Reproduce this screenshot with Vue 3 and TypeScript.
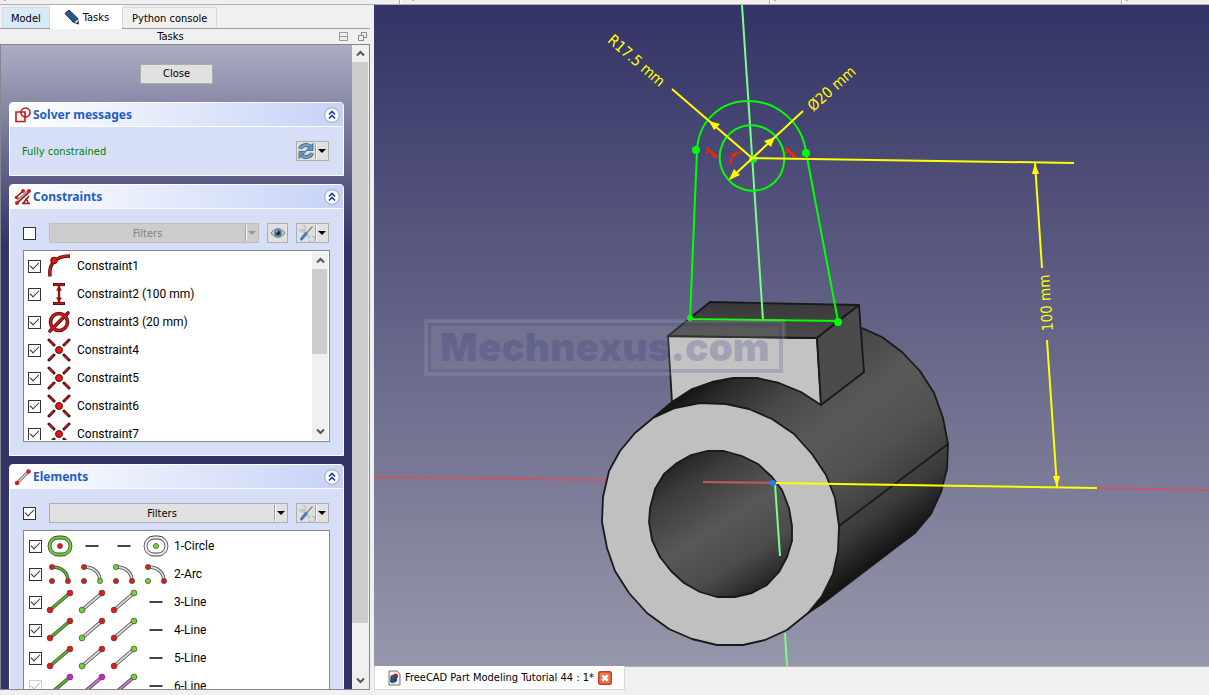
<script setup lang="ts">
import { ref } from 'vue'

interface Constraint {
  name: string
  kind: 'tangent' | 'distance' | 'diameter' | 'coincident'
  on: boolean
}
interface Glyph {
  kind: 'circle' | 'arc' | 'line' | 'none'
  edge: string
  start: string
  end: string
  mid: string
}
interface SketchElement {
  name: string
  on: boolean
  locked: boolean
  glyphs: Glyph[]
}

const RED = '#e01b1b'
const GREEN = '#6fd62a'
const GREY = '#dcdcdc'
const PINK = '#e01bd8'
const LEAF = '#58b81c'

const g = (kind: Glyph['kind'], edge = GREY, start = RED, end = RED, mid = RED): Glyph => ({ kind, edge, start, end, mid })
const lineGlyphs = (): Glyph[] => [g('line', LEAF), g('line', GREY, GREEN, RED), g('line', GREY, RED, GREEN), g('none')]

const constraints = ref<Constraint[]>([
  { name: 'Constraint1', kind: 'tangent', on: true },
  { name: 'Constraint2 (100 mm)', kind: 'distance', on: true },
  { name: 'Constraint3 (20 mm)', kind: 'diameter', on: true },
  { name: 'Constraint4', kind: 'coincident', on: true },
  { name: 'Constraint5', kind: 'coincident', on: true },
  { name: 'Constraint6', kind: 'coincident', on: true },
  { name: 'Constraint7', kind: 'coincident', on: true },
])

const elements = ref<SketchElement[]>([
  { name: '1-Circle', on: true, locked: false, glyphs: [g('circle', GREEN), g('none'), g('none'), g('circle', '#f0f0f0', RED, RED, GREEN)] },
  { name: '2-Arc', on: true, locked: false, glyphs: [g('arc', LEAF), g('arc', GREY, RED, GREEN), g('arc', GREY, GREEN, RED), g('arc', GREY, RED, RED, GREEN)] },
  { name: '3-Line', on: true, locked: false, glyphs: lineGlyphs() },
  { name: '4-Line', on: true, locked: false, glyphs: lineGlyphs() },
  { name: '5-Line', on: true, locked: false, glyphs: lineGlyphs() },
  { name: '6-Line', on: true, locked: true, glyphs: [g('line', LEAF, PINK, PINK), g('line', '#e070e0', GREEN, PINK), g('line', '#e070e0', PINK, GREEN), g('none')] },
])

const filterConstraints = ref(false)
const filterElements = ref(true)
</script>

<template>
  <div class="app">
    <div class="strip" aria-hidden="true"><i></i><i class="wide"></i><i></i><i></i></div>
    <div class="main">
      <aside class="dock">
        <nav class="tabs">
          <button class="tab model">Model</button>
          <button class="tab active">
            <svg width="18" height="18" viewBox="0 0 18 18" aria-hidden="true">
              <path d="M2 4.500 L6 1 L14.500 9 L15.500 15 L10 13Z" fill="#2c5175" stroke="#1d3348" />
              <path d="M4 4 L11.500 11 M6 2.500 L13.500 9.500" stroke="#3d678f" fill="none" />
              <path d="M11.500 13 L14.500 10.500 L16 15.500Z" fill="#c9d3da" /><path d="M13.500 14.300 L15 12.800 L16 15.500Z" fill="#111" />
            </svg>
            Tasks
          </button>
          <button class="tab">Python console</button>
        </nav>
        <div class="title">
          <span>Tasks</span>
          <button aria-label="Collapse"><svg width="9" height="9" viewBox="0 0 9 9"><path d="M.5 .5h8v8h-8zM.5 4.500h8" fill="none" stroke="#999" /></svg></button>
          <button aria-label="Float"><svg width="9" height="9" viewBox="0 0 9 9"><path d="M3.500 3V.5h5v5H6M.5 3.500h5v5h-5z" fill="none" stroke="#888" /></svg></button>
        </div>
        <div class="scroll">
          <div class="tasks">
            <button class="close">Close</button>

            <section class="box">
              <header>
                <svg width="18" height="18" viewBox="0 0 18 18" aria-hidden="true">
                  <path d="M2 6h9v9.500H2z" fill="none" stroke="#c4161c" stroke-width="1.600" /><circle cx="11.500" cy="6.500" r="4.500" fill="none" stroke="#c4161c" stroke-width="1.600" />
                </svg>
                <h2>Solver messages</h2>
                <button class="fold" aria-label="Collapse solver messages"><svg width="16" height="16" viewBox="0 0 16 16"><circle cx="8" cy="8" r="7.300" fill="#fff" stroke="#b4b9d3" stroke-width="1.400" /><path d="M5 7.500l3-3 3 3M5 11.500l3-3 3 3" fill="none" stroke="#1b3d9c" stroke-width="1.700" /></svg></button>
              </header>
              <div class="body solver">
                <span class="ok">Fully constrained</span>
                <button class="tool split" aria-label="Update">
                  <svg width="18" height="18" viewBox="0 0 18 18"><path d="M3 7a6 5 0 0 1 10-2.500M15 11a6 5 0 0 1-10 2.500" fill="none" stroke="#3a6282" stroke-width="4" /><path d="M3 7a6 5 0 0 1 10-2.500M15 11a6 5 0 0 1-10 2.500" fill="none" stroke="#6f9fca" stroke-width="2.400" /><path d="M16 1.500v7h-7zM2 16.500v-7h7z" fill="#6496c4" stroke="#3a6282" stroke-width=".8" /></svg>
                  <span class="drop"></span>
                </button>
              </div>
            </section>

            <section class="box">
              <header>
                <svg width="18" height="18" viewBox="0 0 18 18" aria-hidden="true">
                  <path d="M4 13L14 4" stroke="#777" stroke-width="3.600" /><path d="M4 13L14 4" stroke="#ddd" stroke-width="1.600" /><path d="M2 9.500L9 3M2 16L16 3M9 15.500L15 8M8 15.500h8" fill="none" stroke="#a5161c" stroke-width="1.600" />
                  <g fill="#d01c22"><circle cx="9" cy="3" r="2" /><circle cx="15" cy="3" r="2" /><circle cx="2.500" cy="9.500" r="1.800" /><circle cx="3" cy="15" r="2" /></g><path d="M11 11q3 1 3 4" fill="none" stroke="#c4161c" stroke-width="1.400" />
                </svg>
                <h2>Constraints</h2>
                <button class="fold" aria-label="Collapse constraints"><svg width="16" height="16" viewBox="0 0 16 16"><circle cx="8" cy="8" r="7.300" fill="#fff" stroke="#b4b9d3" stroke-width="1.400" /><path d="M5 7.500l3-3 3 3M5 11.500l3-3 3 3" fill="none" stroke="#1b3d9c" stroke-width="1.700" /></svg></button>
              </header>
              <div class="body">
                <div class="bar">
                  <input v-model="filterConstraints" type="checkbox" aria-label="Enable constraint filters" />
                  <button class="tool filter" disabled><span class="label">Filters</span><span class="drop"></span></button>
                  <button class="tool eye" aria-label="Show or hide"><svg width="16" height="12" viewBox="0 0 18 14"><path d="M1 7q8-10.500 16 0q-8 10.500-16 0Z" fill="#d4dade" stroke="#888" stroke-width="1.400" /><circle cx="9" cy="7" r="4.500" fill="#4577a5" /><circle cx="9" cy="7" r="2.300" fill="#0c2238" /><circle cx="7.500" cy="5.500" r="1" fill="#bcd6ec" /></svg></button>
                  <button class="tool split" aria-label="Constraint settings">
                    <svg width="18" height="18" viewBox="0 0 18 18"><path d="M5 5L13 14" stroke="#c2cacf" stroke-width="3" /><path d="M2.500 4.500a3 3 0 1 0 3-3M12 15.500a3 3 0 1 0 3-3" fill="none" stroke="#c2cacf" stroke-width="2" /><path d="M15.500 2.500L9.500 9" stroke="#7a8c9a" stroke-width="1.500" /><path d="M9 9.500L4.500 15" stroke="#4b80b5" stroke-width="3" stroke-linecap="round" /></svg>
                    <span class="drop"></span>
                  </button>
                </div>
                <div class="list constraints">
                  <div class="rows">
                    <label v-for="c in constraints" :key="c.name" class="row">
                      <input v-model="c.on" type="checkbox" />
                      <svg width="24" height="24" viewBox="-12 -12 24 24" aria-hidden="true">
                        <template v-if="c.kind === 'tangent'">
                          <path d="M-9 10.500C-10.500-2-4-10 11-10" fill="none" stroke="#4d0b0b" stroke-width="3.400" /><path d="M-9 10C-10.500-2-4-10 10.500-10" fill="none" stroke="#cc1a1a" stroke-width="1.800" /><circle cx="-5" cy="-5.500" r="3.300" fill="#dd1616" stroke="#6b0b0b" />
                        </template>
                        <template v-else-if="c.kind === 'distance'">
                          <path d="M-6-9.500H6M-6 9.500H6" stroke="#4d0b0b" stroke-width="3" /><path d="M-5-9.500H5M-5 9.500H5" stroke="#cc1a1a" stroke-width="1.400" /><path d="M0-8V8" stroke="#a01212" stroke-width="2.400" /><path d="M0-8l3 4.500h-6zM0 8l3-4.500h-6z" fill="#8d1010" />
                        </template>
                        <template v-else-if="c.kind === 'diameter'">
                          <circle r="8.500" fill="none" stroke="#4d0b0b" stroke-width="3.600" /><path d="M-9 9L9-9" stroke="#4d0b0b" stroke-width="3.600" stroke-linecap="round" /><circle r="8.500" fill="none" stroke="#cc1a1a" stroke-width="2" /><path d="M-9 9L9-9" stroke="#cc1a1a" stroke-width="2" stroke-linecap="round" />
                        </template>
                        <template v-else>
                          <path d="M-10-10l5 5M10-10l-5 5M-10 10l5-5M10 10l-5-5" stroke="#4a1515" stroke-width="3" stroke-linecap="round" /><path d="M-9.500-9.500l4 4M9.500-9.500l-4 4M-9.500 9.500l4-4M9.500 9.500l-4-4" stroke="#c11b1b" stroke-width="1.400" /><circle r="3.500" fill="#dd1616" stroke="#7c0e0e" />
                        </template>
                      </svg>
                      <span>{{ c.name }}</span>
                    </label>
                  </div>
                  <div class="vbar">
                    <button aria-label="Scroll up"><svg width="9" height="7" viewBox="0 0 9 7"><path d="M1 5.500L4.500 2 8 5.500" fill="none" stroke="#555" stroke-width="2" /></svg></button>
                    <div class="track"><div class="thumb short"></div></div>
                    <button aria-label="Scroll down"><svg width="9" height="7" viewBox="0 0 9 7"><path d="M1 1.500L4.500 5 8 1.500" fill="none" stroke="#555" stroke-width="2" /></svg></button>
                  </div>
                </div>
              </div>
            </section>

            <section class="box">
              <header>
                <svg width="18" height="18" viewBox="0 0 18 18" aria-hidden="true"><path d="M3 15L15 3" stroke="#555" stroke-width="3" /><path d="M3 15L15 3" stroke="#ddd" stroke-width="1.400" /><circle cx="3" cy="15" r="2.200" fill="#d01c1c" /><circle cx="14.500" cy="3.500" r="2.200" fill="#d01c1c" /></svg>
                <h2>Elements</h2>
                <button class="fold" aria-label="Collapse elements"><svg width="16" height="16" viewBox="0 0 16 16"><circle cx="8" cy="8" r="7.300" fill="#fff" stroke="#b4b9d3" stroke-width="1.400" /><path d="M5 7.500l3-3 3 3M5 11.500l3-3 3 3" fill="none" stroke="#1b3d9c" stroke-width="1.700" /></svg></button>
              </header>
              <div class="body">
                <div class="bar">
                  <input v-model="filterElements" type="checkbox" aria-label="Enable element filters" />
                  <button class="tool filter"><span class="label">Filters</span><span class="drop"></span></button>
                  <button class="tool split" aria-label="Element settings">
                    <svg width="18" height="18" viewBox="0 0 18 18"><path d="M5 5L13 14" stroke="#c2cacf" stroke-width="3" /><path d="M2.500 4.500a3 3 0 1 0 3-3M12 15.500a3 3 0 1 0 3-3" fill="none" stroke="#c2cacf" stroke-width="2" /><path d="M15.500 2.500L9.500 9" stroke="#7a8c9a" stroke-width="1.500" /><path d="M9 9.500L4.500 15" stroke="#4b80b5" stroke-width="3" stroke-linecap="round" /></svg>
                    <span class="drop"></span>
                  </button>
                </div>
                <div class="list elements">
                  <div class="rows">
                    <label v-for="e in elements" :key="e.name" class="row">
                      <input v-model="e.on" type="checkbox" :disabled="e.locked" />
                      <span class="glyphs">
                        <svg v-for="(k, i) in e.glyphs" :key="i" width="32" height="28" viewBox="-16 -14 32 28" aria-hidden="true">
                          <template v-if="k.kind === 'circle'">
                            <rect x="-10.500" y="-8.500" width="21" height="17" rx="8.500" fill="#fff" stroke="#444" stroke-width="3.800" /><rect x="-10.500" y="-8.500" width="21" height="17" rx="8.500" fill="none" :stroke="k.edge" stroke-width="2.200" /><circle r="2.600" :fill="k.mid" stroke="#555" stroke-width=".7" />
                          </template>
                          <template v-else-if="k.kind === 'arc'">
                            <path d="M-8-7C1-7 8-2 8 7" fill="none" stroke="#4a4a4a" stroke-width="3.400" /><path d="M-8-7C1-7 8-2 8 7" fill="none" :stroke="k.edge" stroke-width="1.800" />
                            <g stroke="#444" stroke-width=".7"><circle cx="-8" cy="-7" r="2.600" :fill="k.start" /><circle cx="8" cy="7" r="2.600" :fill="k.end" /><circle cx="-8" cy="7" r="2.600" :fill="k.mid" /></g>
                          </template>
                          <template v-else-if="k.kind === 'line'">
                            <path d="M-10 8L10-9" stroke="#4a4a4a" stroke-width="3.600" /><path d="M-10 8L10-9" :stroke="k.edge" stroke-width="1.800" />
                            <g stroke="#444" stroke-width=".7"><circle cx="-10" cy="8" r="2.900" :fill="k.start" /><circle cx="10" cy="-9" r="2.900" :fill="k.end" /></g>
                          </template>
                          <path v-else d="M-6.500 0H6.500" stroke="#444" stroke-width="2" />
                        </svg>
                      </span>
                      <span>{{ e.name }}</span>
                    </label>
                  </div>
                </div>
              </div>
            </section>
          </div>
          <div class="vbar outer">
            <button aria-label="Scroll up"><svg width="9" height="7" viewBox="0 0 9 7"><path d="M1 5.500L4.500 2 8 5.500" fill="none" stroke="#555" stroke-width="2" /></svg></button>
            <div class="track"><div class="thumb long"></div></div>
            <button aria-label="Scroll down"><svg width="9" height="7" viewBox="0 0 9 7"><path d="M1 1.500L4.500 5 8 1.500" fill="none" stroke="#555" stroke-width="2" /></svg></button>
          </div>
        </div>
      </aside>

      <main class="work">
        <svg class="view" viewBox="374 5 835 661" preserveAspectRatio="xMidYMid slice" role="img" aria-label="3D view">
          <defs>
            <linearGradient id="shell" gradientUnits="userSpaceOnUse" x1="653" y1="418" x2="802" y2="617">
              <stop offset="0" stop-color="#151515" /><stop offset=".08" stop-color="#2a2a2a" /><stop offset=".25" stop-color="#484848" /><stop offset=".45" stop-color="#595959" /><stop offset=".65" stop-color="#515151" /><stop offset=".85" stop-color="#3b3b3b" /><stop offset="1" stop-color="#141414" />
            </linearGradient>
            <linearGradient id="bore" gradientUnits="userSpaceOnUse" x1="675" y1="453" x2="765" y2="596">
              <stop offset="0" stop-color="#1c1c1c" /><stop offset=".2" stop-color="#3c3c3c" /><stop offset=".5" stop-color="#585858" /><stop offset=".75" stop-color="#4b4b4b" /><stop offset=".92" stop-color="#2b2b2b" /><stop offset="1" stop-color="#1a1a1a" />
            </linearGradient>
            <linearGradient id="roof" x1="0" y1="0" x2="0" y2="1"><stop offset="0" stop-color="#383838" /><stop offset="1" stop-color="#4a4a4a" /></linearGradient>
          </defs>
          <path d="M374 477L605 480M1096 488L1209 490" stroke="#c05a66" stroke-width="2" />
          <path d="M785 633L787 666" stroke="#78ff86" stroke-width="2" />
          <g stroke="#191919" stroke-width="1.800" stroke-linejoin="round">
            <path d="M653 418L672 402 692 389 712 382 733 378 757 378 862 328 882 337 902 352 920 371 934 393 943 418 948 444 947 469 941 492 931 514 915 533 895 548 823 603 808 613Z" fill="url(#shell)" />
            <path d="M839 526L948 444" />
            <path d="M668 336L817 338 821 405 801 392 779 383 757 378 733 378 712 382 692 389 672 402Z" fill="#c3c3c3" />
            <path d="M710 302L859 305 817 338 668 336Z" fill="url(#roof)" />
            <path d="M859 305L864 372 821 405 817 338Z" fill="#4b4b4b" />
            <path fill="#c0c0c0" d="M839 526L838 551 833 574 822 596 808 613 787 630 765 640 743 645 717 645 692 639 669 629 647 613 629 593 615 571 607 548 602 522 603 497 609 471 620 451 635 433 653 418 675 408 700 403 726 404 749 409 772 419 794 434 812 454 826 475 835 498Z" />
            <path fill="url(#bore)" d="M649 522L650 508 655 489 664 474 677 463 691 455 707 451 724 451 742 456 758 464 772 477 782 490 789 508 792 526 792 541 787 557 779 572 767 585 752 593 735 597 717 597 700 592 684 583 671 571 660 557 652 540Z" />
          </g>
          <path d="M703 482L773 483" stroke="#c05a60" stroke-width="2" />
          <path d="M742 5L763 320M775 484L780 556" stroke="#78ff86" stroke-width="2" />
          <g fill="none" stroke="#00ff00" stroke-width="2">
            <path d="M697 151C698 120 722 101 748 101C778 101 802 123 806 152L838 321L690 319Z" />
            <ellipse cx="752" cy="158" rx="32" ry="33" transform="rotate(-30 752 158)" />
          </g>
          <g fill="#00ff00"><circle cx="696" cy="150" r="4" /><circle cx="806" cy="153" r="4" /><circle cx="690" cy="318" r="3" /><circle cx="838" cy="322" r="4" /><circle cx="753" cy="159" r="4" /></g>
          <g fill="none" stroke="#ff2200" stroke-width="2"><path d="M707 148L717 157M711 152L716 158M706 153L710 151M786 148L796 157M790 152L795 158M785 153L789 151M731 164Q730 153 742 152" /></g>
          <circle cx="734" cy="155" r="2" fill="#ff2200" />
          <g fill="none" stroke="#ffff00" stroke-width="2"><path d="M672 89L752 158L1074 163M803 111L730 179M773 483L1097 488M1035 163L1042 268M1047 340L1057 487" /></g>
          <path fill="#ffff00" d="M709 121L720 124 714 130ZM775 137L771 147 764 141ZM729 180L740 175 734 169ZM1035 163L1039 174 1032 174ZM1057 487L1060 476 1053 476Z" />
          <circle cx="773" cy="483" r="3" fill="#2878ff" />
          <g class="dims" fill="#ffff00">
            <text transform="translate(637 60) rotate(41)" dy="6">R17.5 mm</text>
            <text transform="translate(831 88) rotate(-42)" dy="6">Ø20 mm</text>
            <text transform="translate(1045 303) rotate(-94)" dy="6">100 mm</text>
          </g>
          <g class="mark">
            <rect x="426" y="321" width="358" height="53" fill="#c8c8c8" fill-opacity=".14" stroke="#c8c8c8" stroke-opacity=".14" stroke-width="4" />
            <rect x="429" y="324" width="352" height="47" fill="none" stroke="#28307a" stroke-opacity=".18" stroke-width="4" />
            <text x="605" y="361" fill="#28307a" fill-opacity=".22">Mechnexus.com</text>
          </g>
        </svg>
        <div class="docs">
          <div class="doc">
            <svg width="13" height="16" viewBox="0 0 13 16" aria-hidden="true"><path d="M1 1h8l3 3v11H1z" fill="#eee" stroke="#777" /><path d="M3 6l4-1.500v6.500l-3 2-1.500-1.500z" fill="#1e5a8e" stroke="#132c44" stroke-width=".7" /><path d="M5 6l2-2.500 3 1v3l-3 1z" fill="#c9181e" /><path d="M5 8l4-1v4l-3 2z" fill="#174a78" /></svg>
            <span>FreeCAD Part Modeling Tutorial 44 : 1*</span>
            <button aria-label="Close document"><svg width="14" height="14" viewBox="0 0 14 14"><rect x=".7" y=".7" width="12.600" height="12.600" rx="1.500" fill="#e07850" stroke="#cf3c1f" stroke-width="1.400" /><path d="M4.300 4.300l5.400 5.400M9.700 4.300L4.300 9.700" stroke="#fff" stroke-width="2.400" /></svg></button>
          </div>
        </div>
      </main>
    </div>
  </div>
</template>

<style>
body { margin: 0; background: #f0f0f0; }
</style>

<style scoped>
* { box-sizing: border-box; }
.app { height: 100vh; display: flex; flex-direction: column; overflow: hidden; background: #f0f0f0; color: #000; font: 11px/16px "DejaVu Sans Condensed", "Noto Sans", sans-serif; }
button { font: inherit; color: inherit; padding: 0; margin: 0; border: 0; background: none; }
svg { display: block; flex: none; }
.strip { height: 5px; flex: none; display: grid; grid-template-columns: 400px 370px 352px 1fr; border-bottom: 1px solid #b0b0b0; }
.strip i { border-right: 1px solid #aaa; box-shadow: 1px 0 #fff; }
.strip i:last-child { border: 0; }
.strip i::before { content: ""; display: block; width: 2px; height: 1px; margin-left: 4px; background: #aaa; }
.strip .wide::before { margin-left: 12px; }
.main { flex: 1; min-height: 0; display: flex; }
.dock { width: 370px; flex: none; display: flex; flex-direction: column; padding-bottom: 5px; }
.tabs { display: flex; align-items: flex-end; height: 24px; padding-left: 2px; border-bottom: 1px solid #a0a0a0; }
.tab { height: 21px; padding: 2px 9px 0; border: 1px solid #d9d9d9; border-bottom: 0; }
.tab.model { background: #d8eaf9; padding: 2px 8px 0; }
.tab.active { height: 24px; margin-bottom: -1px; padding: 0 12px; background: #fff; display: flex; align-items: center; gap: 2px; border-color: #fff; }
.title { height: 15px; display: flex; align-items: center; gap: 10px; padding: 0 3px 0 12px; }
.title span { flex: 1; text-align: center; }
.scroll { flex: 1; min-height: 0; display: flex; border: 1px solid #828790; }
.tasks { flex: 1; min-width: 0; overflow: hidden; display: flex; flex-direction: column; gap: 8px; padding: 19px 8px 0; background: linear-gradient(#adadc4, #333366 200px); }
.close { width: 73px; height: 20px; flex: none; align-self: center; margin-bottom: 10px; border: 1px solid #adadad; background: #e1e1e1; }
.box { flex: none; border: 1px solid #fff; border-radius: 4px 4px 0 0; background: #d6dff7; overflow: hidden; }
.box header { height: 24px; display: flex; align-items: center; gap: 1px; padding: 0 3px 0 4px; background: linear-gradient(90deg, #fff, #c6d3f7); border-bottom: 1px solid #fff; }
h2 { flex: 1; margin: 0; font: bold 12px/16px "Noto Sans", "Open Sans", sans-serif; color: #215dc6; }
.body { padding: 14px 13px 13px; }
.solver { display: flex; justify-content: space-between; align-items: center; padding: 14px 14px 14px 12px; }
.ok { padding-top: 2px; color: #008000; }
.tool { height: 20px; display: flex; align-items: center; justify-content: center; border: 1px solid #adadad; background: #e1e1e1; }
.split { width: 33px; }
.drop { width: 13px; height: 16px; flex: none; display: grid; place-items: center; border-left: 1px solid #a0a0a0; box-shadow: inset 1px 0 #fff; }
.drop::before { content: ""; border: 4px solid transparent; border-top-color: #000; border-bottom: 0; }
input[type="checkbox"] { appearance: none; width: 13px; height: 13px; flex: none; margin: 0; border: 1px solid #333; background: #fff; display: grid; place-items: center; }
input:checked::before { content: ""; width: 8px; height: 4px; margin-bottom: 3px; border: solid #333; border-width: 0 0 1px 1px; transform: rotate(-45deg); }
input[type="checkbox"]:disabled { border-color: #ccc; }
input:disabled::before { border-color: #bbb; }
.bar { display: flex; align-items: center; gap: 8px; padding-right: 1px; margin-bottom: 7px; }
.filter { flex: 1; margin-left: 5px; }
.filter .label { flex: 1; padding-top: 2px; }
.filter:disabled { background: #ccc; color: #838383; border-color: #bfbfbf; }
.filter:disabled .drop::before { border-top-color: #999; }
.eye { width: 21px; }
.list { display: flex; border: 1px solid #828790; background: #fff; padding: 1px; overflow: hidden; }
.constraints { height: 192px; }
.rows { flex: 1; min-width: 0; overflow: hidden; }
.row { height: 28px; display: flex; align-items: center; padding-left: 3px; gap: 6px; font: 12px/16px Roboto, "Noto Sans", sans-serif; }
.elements .row { padding-left: 4px; gap: 2px; }
.glyphs { display: flex; }
.vbar { width: 16px; flex: none; display: flex; flex-direction: column; background: #f0f0f0; }
.vbar.outer { width: 17px; }
.vbar button { height: 17px; display: grid; place-items: center; }
.track { flex: 1; padding: 0 1px 0 0; }
.thumb { background: #cdcdcd; }
.short { height: 55%; }
.long { height: 92%; }
.work { flex: 1; min-width: 0; display: flex; flex-direction: column; padding-left: 4px; }
.view { width: 100%; flex: 1; min-height: 0; background: linear-gradient(#333366, #9797ab); }
.docs { height: 29px; flex: none; display: flex; align-items: flex-start; border-top: 1px solid #b0b0b0; }
.doc { height: 24px; margin-top: -1px; display: flex; align-items: center; gap: 4px; padding: 0 12px 0 13px; background: #fff; border: 1px solid #d9d9d9; border-top: 0; }
.dims { font: 15px "DejaVu Sans Condensed", "Noto Sans", sans-serif; text-anchor: middle; }
.mark { font: 900 39px "Inter", "Liberation Sans", sans-serif; text-anchor: middle; }
</style>
